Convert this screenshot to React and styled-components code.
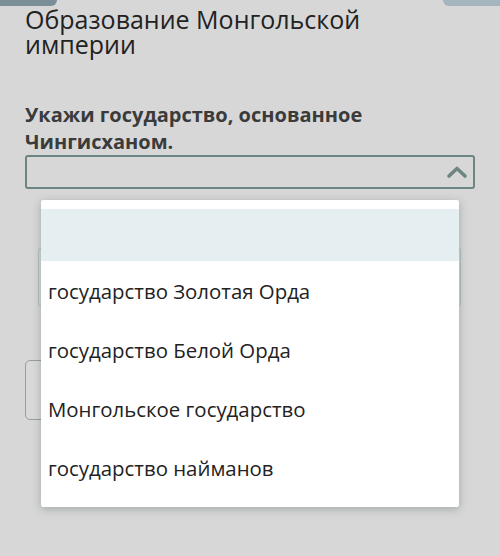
import React from "react";
import styled, { createGlobalStyle } from "styled-components";

const Global = createGlobalStyle`
  html, body { margin: 0; padding: 0; }
  body {
    font-family: "Open Sans", "Noto Sans", sans-serif;
    background: #d7d7d7;
  }
`;

const Screen = styled.div`
  position: relative;
  width: 500px;
  height: 556px;
  overflow: hidden;
  background: #d7d7d7;
  display: flex;
  flex-direction: column;
`;

const TabStrip = styled.div`
  display: flex;
  justify-content: space-between;
  height: 6px;
`;

const Tab = styled.div`
  width: 57px;
  height: 6px;
  background: ${(p) => (p.$side === "left" ? "#7b8f98" : "#a4b5bd")};
  border-radius: ${(p) => (p.$side === "left" ? "0 0 6px 0" : "0 0 0 6px")};
`;

const Content = styled.div`
  display: flex;
  flex-direction: column;
  padding: 0 25px;
`;

const Title = styled.h1`
  margin: 1px 0 0;
  font-size: 25px;
  font-weight: 400;
  line-height: 25px;
  color: #222;
`;

const Question = styled.p`
  margin: 44px 0 0;
  font-size: 20px;
  font-weight: 700;
  line-height: 27px;
  color: #3b3b3b;
`;

const SelectBox = styled.div`
  box-sizing: border-box;
  height: 34px;
  border: 2px solid #6e8683;
  border-radius: 3px;
  display: flex;
  align-items: center;
  justify-content: flex-end;
  padding-right: 6px;
`;

const AnswerArea = styled.div`
  box-sizing: border-box;
  margin: 59px 14px 0 13px;
  height: 58px;
  border: 1px solid #b7c1c1;
  border-radius: 2px;
`;

const CheckButton = styled.div`
  box-sizing: border-box;
  margin-top: 54px;
  width: 120px;
  height: 60px;
  border: 1.5px solid #9a9d9d;
  border-radius: 5px;
  background: #d9d9d9;
`;

const Menu = styled.ul`
  position: absolute;
  left: 41px;
  top: 200px;
  width: 418px;
  margin: 0;
  padding: 9px 0 10px;
  list-style: none;
  background: #fff;
  border-radius: 2px;
  box-shadow: 0 2px 9px rgba(60, 80, 80, 0.35);
`;

const Option = styled.li`
  display: flex;
  align-items: center;
  height: ${(p) => (p.$blank ? "52px" : "59px")};
  padding-left: 7px;
  font-size: 20.4px;
  color: #222;
  background: ${(p) => (p.$active ? "#e5eef1" : "#fff")};
`;

const Chevron = () => (
  <svg width="20" height="12" viewBox="0 0 20 12" fill="none">
    <path
      d="M2 10 L10 2.5 L18 10"
      stroke="#6e8683"
      strokeWidth="3.6"
      strokeLinecap="round"
      strokeLinejoin="round"
    />
  </svg>
);

const options = [
  "государство Золотая Орда",
  "государство Белой Орда",
  "Монгольское государство",
  "государство найманов",
];

export default function App() {
  return (
    <Screen>
      <Global />
      <TabStrip>
        <Tab $side="left" />
        <Tab $side="right" />
      </TabStrip>
      <Content>
        <Title>
          Образование Монгольской
          <br />
          империи
        </Title>
        <Question>
          Укажи государство, основанное
          <br />
          Чингисханом.
        </Question>
        <SelectBox>
          <Chevron />
        </SelectBox>
        <AnswerArea />
        <CheckButton />
      </Content>
      <Menu>
        <Option $blank $active />
        {options.map((o) => (
          <Option key={o}>{o}</Option>
        ))}
      </Menu>
    </Screen>
  );
}
